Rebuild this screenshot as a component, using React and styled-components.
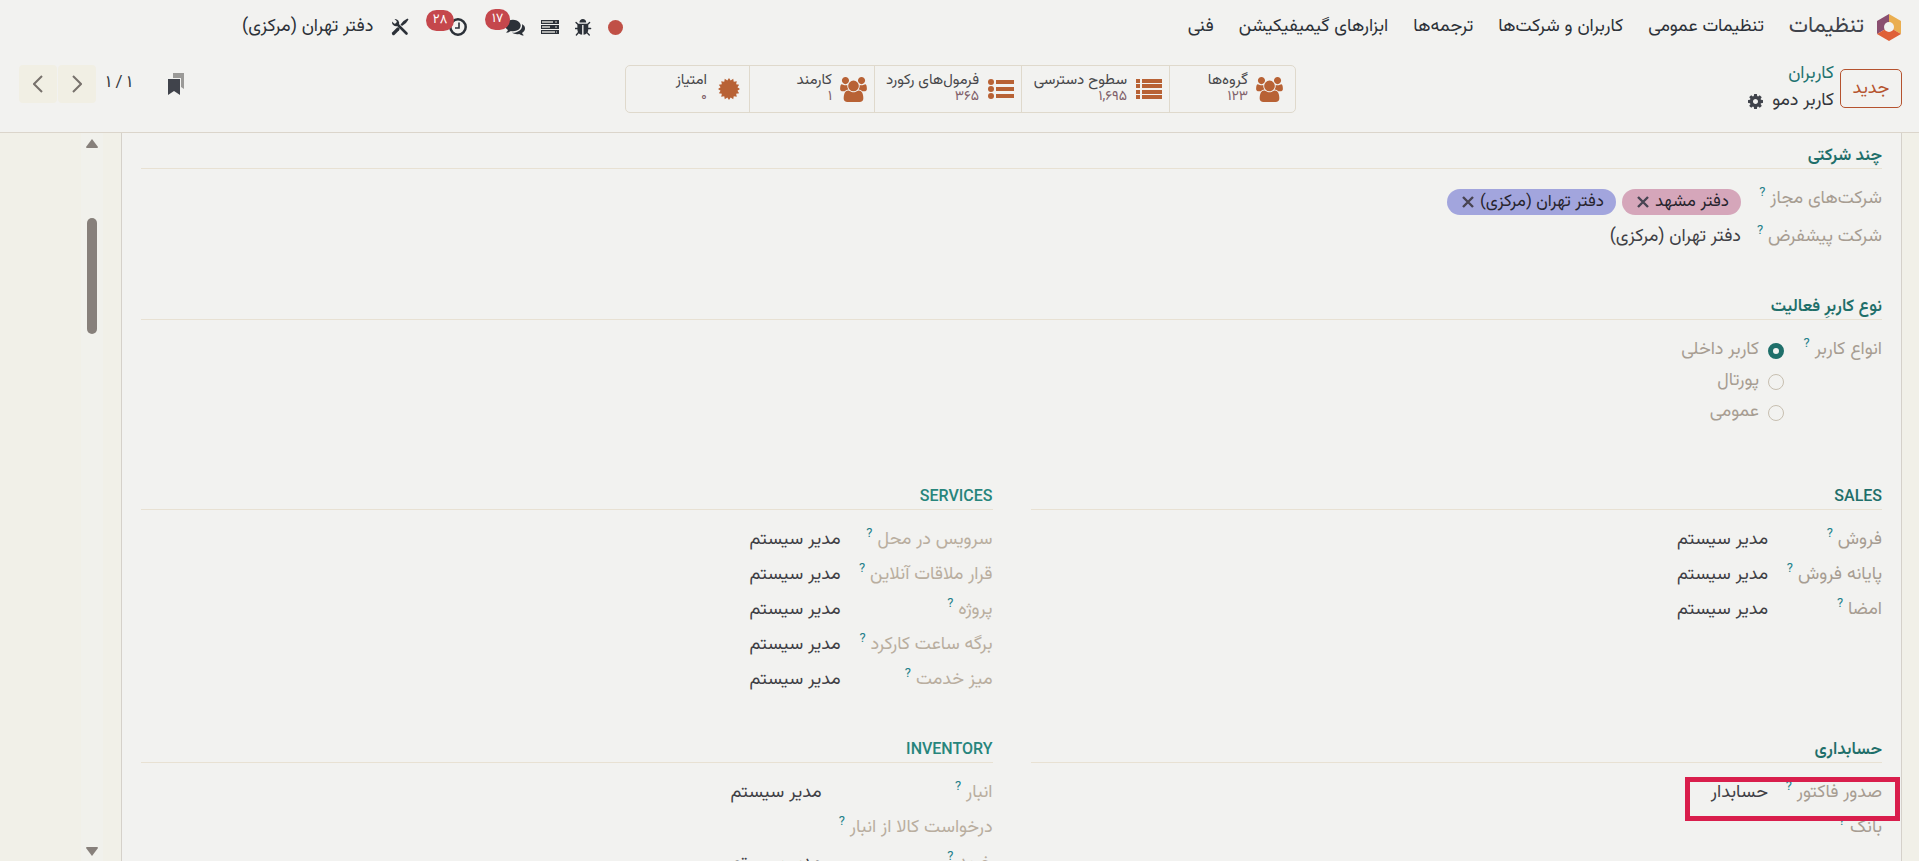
import React, { useState } from "react"
import styled, { createGlobalStyle } from "styled-components"

const GlobalStyle = createGlobalStyle`
  * {
    box-sizing: border-box;
  }
  body {
    margin: 0;
    background: #f2f2f0;
    color: #34373d;
    font-family: "Vazirmatn", "Roboto", "DejaVu Sans", sans-serif;
    font-size: 18px;
  }
  button {
    font: inherit;
    padding: 0;
    cursor: pointer;
  }
  a {
    color: inherit;
    text-decoration: none;
  }
`

const Page = styled.div`
  display: flex;
  flex-direction: column;
  height: 100vh;
  overflow: hidden;
`

/* top bar */

const Navbar = styled.header`
  display: flex;
  justify-content: space-between;
  align-items: center;
  height: 54px;
  padding: 0 18px 0 242px;
  flex-shrink: 0;
`

const NavMenu = styled.nav`
  display: flex;
  align-items: center;
  gap: 25px;
  color: #2c3138;
  line-height: 26px;
  white-space: nowrap;
`

const Brand = styled.a`
  display: flex;
  align-items: center;
  gap: 13px;
  font-size: 22px;
  color: #40434b;
`

const Tray = styled.div`
  display: flex;
  align-items: center;
  color: #2c3138;
`

const TrayButton = styled.button`
  position: relative;
  display: flex;
  border: 0;
  background: none;
  color: inherit;
  margin-left: ${(props) => props.$space || "16px"};
`

const Badge = styled.span`
  position: absolute;
  top: -8px;
  right: calc(100% - 5px);
  min-width: 25px;
  height: 21px;
  padding: 0 7px;
  border-radius: 11px;
  background: #c5474c;
  color: #fff;
  font-size: 13px;
  line-height: 21px;
`

const StatusDot = styled.span`
  width: 15px;
  height: 15px;
  border-radius: 50%;
  background: #c05046;
`

const CompanyButton = styled.button`
  border: 0;
  background: none;
  color: inherit;
  line-height: 26px;
`

/* control panel */

const ControlPanel = styled.div`
  display: grid;
  grid-template-columns: 1fr auto 1fr;
  align-items: start;
  height: 79px;
  padding: 6px 17px 0 19px;
  border-bottom: 1px solid #dbd5cb;
  flex-shrink: 0;
`

const PanelStart = styled.div`
  display: flex;
  gap: 6px;
`

const NewButton = styled.button`
  width: 62px;
  height: 39px;
  margin-top: 9px;
  border: 1px solid #b5532f;
  border-radius: 5px;
  background: none;
  color: #b5532f;
`

const Breadcrumbs = styled.div`
  display: flex;
  flex-direction: column;
  padding-top: 1px;
  line-height: 27px;
`

const CrumbLink = styled.a`
  color: #1f7470;
`

const CurrentCrumb = styled.div`
  display: flex;
  align-items: center;
  gap: 9px;
`

const IconButton = styled.button`
  display: flex;
  border: 0;
  background: none;
  color: #40434b;
`

const StatButtons = styled.div`
  display: flex;
  margin-top: 5px;
  border: 1px solid #dfd9cc;
  border-radius: 5px;
`

const StatButton = styled.button`
  display: flex;
  align-items: center;
  gap: 8px;
  width: ${(props) => props.$width};
  height: 46px;
  padding: 0 ${(props) => props.$inset || "7px"} 0 0;
  border: 0;
  background: none;
  color: #47474a;
  & + & {
    border-right: 1px solid #dfd9cc;
  }
`

const StatIcon = styled.span`
  display: flex;
  justify-content: center;
  width: 27px;
  color: #b86235;
`

const StatText = styled.span`
  display: flex;
  flex-direction: column;
  align-items: flex-start;
  font-size: 15px;
  line-height: 16px;
  white-space: nowrap;
`

const StatCount = styled.span`
  color: #80606a;
  font-size: 14px;
`

const PanelEnd = styled.div`
  display: flex;
  justify-content: flex-end;
  align-items: center;
  height: 38px;
  margin-top: 5px;
`

const PagerCount = styled.span`
  margin: 0 36px 2px 9px;
  font-size: 17px;
  white-space: nowrap;
`

const PagerButton = styled.button`
  display: flex;
  align-items: center;
  justify-content: center;
  width: 38px;
  height: 38px;
  margin-right: 1px;
  border: 0;
  border-radius: 4px;
  background: #f1efe4;
  color: #77716c;
`

/* form */

const Content = styled.main`
  display: flex;
  flex: 1;
  min-height: 0;
  padding-right: 17px;
  background: #f1f0e8;
`

const Sheet = styled.div`
  flex: 1;
  overflow: hidden;
  padding: 9px 19px 0;
  border: solid #d5d1ca;
  border-width: 0 1px;
  background: #f2f2f0;
`

const Columns = styled.div`
  display: grid;
  grid-template-columns: 1fr 1fr;
  column-gap: 38px;
`

const Group = styled.section`
  margin-bottom: 38px;
`

const GroupTitle = styled.h2`
  margin: 0 0 13px;
  padding-top: 2px;
  border-bottom: 1px solid #e8e1d3;
  color: ${(props) => (props.$soft ? "#27857c" : "#1f6f6a")};
  font-size: 17px;
  font-weight: 600;
  line-height: 24px;
  &:lang(en) {
    padding-top: 0;
    font-family: "Roboto", sans-serif;
    font-size: 16px;
    font-weight: 500;
    line-height: 26px;
  }
`

const Fields = styled.dl`
  margin: 0;
`

const Field = styled.div`
  position: relative;
  display: grid;
  grid-template-columns: ${(props) => props.$labelWidth} 1fr;
  min-height: 35px;
  line-height: 35px;
`

const Label = styled.dt`
  color: ${(props) => (props.$soft ? "#b9ae9f" : "#a79d92")};
  white-space: nowrap;
`

const Help = styled.sup`
  margin-right: 5px;
  color: #23808a;
  font-family: "Roboto", sans-serif;
  font-size: 13px;
  line-height: 0;
`

const Value = styled.dd`
  margin: 0;
  color: #3f4045;
`

const Highlight = styled.div`
  position: absolute;
  z-index: 1;
  top: 1px;
  right: -18px;
  width: 215px;
  height: 44px;
  border: 5px solid #d91e4c;
`

const Tags = styled.dd`
  display: flex;
  gap: 6px;
  margin: 0;
  padding: 7px 0 5px;
`

const Tag = styled.span`
  display: flex;
  align-items: center;
  gap: 6px;
  height: 26px;
  padding: 0 12px 0 15px;
  border-radius: 13px;
  background: ${(props) => props.$color};
  color: #27242e;
  font-size: 17px;
  line-height: 26px;
`

const TagRemove = styled.button`
  display: flex;
  border: 0;
  background: none;
  color: #484452;
`

const RadioList = styled.dd`
  margin: 0;
  padding: 2px 0 17px;
`

const RadioItem = styled.label`
  display: flex;
  align-items: center;
  gap: 9px;
  height: 31px;
  color: #a79d92;
`

const Radio = styled.input`
  appearance: none;
  width: 16px;
  height: 16px;
  margin: 0;
  border: 1px solid #c7bfb0;
  border-radius: 50%;
  &:checked {
    border: 5px solid #1f6f6a;
  }
`

const ScrollRail = styled.div`
  display: flex;
  flex-direction: column;
  align-items: center;
  width: 22px;
  margin: 0 18px 0 81px;
  padding: 6px 0 5px;
  background: #f1f1ec;
  color: #87807b;
`

const ScrollThumb = styled.div`
  width: 10px;
  height: 116px;
  margin: 70px 0 auto;
  border-radius: 5px;
  background: #87807b;
`

/* icons */

const Glyph = ({ d, width, height, box = "0 0 1792 1792" }) => (
  <svg width={width} height={height} viewBox={box} fill="currentColor" aria-hidden="true">
    <path d={d} />
  </svg>
)

const usersPath =
  "M593 896q-162 5-265 128h-134q-82 0-138-40.500t-56-118.500q0-353 124-353 6 0 43.500 21t97.500 42.500 119 21.500q67 0 133-23-5 37-5 66 0 139 81 256zm1071 637q0 120-73 189.500t-194 69.500h-874q-121 0-194-69.500t-73-189.500q0-53 3.500-103.500t14-109 26.500-108.500 43-97.500 62-81 85.500-53.500 111.500-20q10 0 43 21.500t73 48 107 48 135 21.500 135-21.500 107-48 73-48 43-21.500q61 0 111.500 20t85.500 53.500 62 81 43 97.500 26.500 108.500 14 109 3.500 103.500zm-1024-1277q0 106-75 181t-181 75-181-75-75-181 75-181 181-75 181 75 75 181zm704 384q0 159-112.500 271.500t-271.500 112.500-271.500-112.500-112.500-271.500 112.500-271.500 271.500-112.500 271.500 112.500 112.500 271.500zm576 225q0 78-56 118.500t-138 40.500h-134q-103-123-265-128 81-117 81-256 0-29-5-66 66 23 133 23 59 0 119-21.500t97.500-42.500 43.500-21q124 0 124 353zm-128-609q0 106-75 181t-181 75-181-75-75-181 75-181 181-75 181 75 75 181z"

const bugPath =
  "M1632 960q0 26-19 45t-45 19h-224q0 171-67 290l208 209q19 19 19 45t-19 45q-18 19-45 19t-45-19l-198-197q-5 5-15 13t-42 28.500-65 36.500-82 29-97 13v-896h-128v896q-51 0-101.500-13.500t-87-33-66-39-43.500-32.500l-15-14-183 207q-20 21-48 21-24 0-43-16-19-18-20.500-44.500t15.500-46.500l202-227q-58-114-58-274h-224q-26 0-45-19t-19-45 19-45 45-19h224v-294l-173-173q-19-19-19-45t19-45 45-19 45 19l173 173h844l173-173q19-19 45-19t45 19 19 45-19 45l-173 173v294h224q26 0 45 19t19 45zm-480-576h-640q0-133 93.500-226.500t226.500-93.500 226.500 93.500 93.500 226.500z"

const commentsPath =
  "M1408 768q0 139-94 257t-256.500 186.500-353.500 68.500q-86 0-176-16-124 88-278 128-36 9-86 16h-3q-11 0-20.500-8t-11.500-21q-1-3-1-6.500t.5-6.500 2-6l2.500-5 3.500-5.500 4-5 4.500-5 4-4.500q5-6 23-25t26-29.500 22.500-29 25-38.500 20.500-44q-124-72-195-177t-71-224q0-139 94-257t256.500-186.500 353.500-68.500 353.500 68.500 256.500 186.500 94 257zm384 256q0 120-71 224.500t-195 176.500q10 24 20.500 44t25 38.500 22.500 29 26 29.500 23 25q1 1 4 4.500t4.500 5 4 5 3.500 5.500l2.500 5 2 6 .5 6.500-1 6.500q-3 14-13 22t-22 7q-50-7-86-16-154-40-278-128-90 16-176 16-271 0-472-132 58 4 88 4 161 0 309-45t264-129q125-92 192-212t67-254q0-77-23-152 129 71 204 178t75 230z"

const cogPath =
  "M1152 896q0-106-75-181t-181-75-181 75-75 181 75 181 181 75 181-75 75-181zm512-109v222q0 12-8 23t-20 13l-185 28q-19 54-39 91 35 50 107 138 10 12 10 25t-9 23q-27 37-99 108t-94 71q-12 0-26-9l-138-108q-44 23-91 38-16 136-29 186-7 28-36 28h-222q-14 0-24.500-8.500t-11.500-21.500l-28-184q-49-16-90-37l-141 107q-10 9-25 9-14 0-25-11-126-114-165-168-7-10-7-23 0-12 8-23 15-21 51-66.500t54-70.500q-27-50-41-99l-183-27q-13-2-21-12.500t-8-23.500v-222q0-12 8-23t19-13l186-28q14-46 39-92-40-57-107-138-10-12-10-24 0-10 9-23 26-36 98.500-107.500t94.500-71.500q13 0 26 10l138 107q44-23 91-38 16-136 29-186 7-28 36-28h222q14 0 24.500 8.500t11.500 21.500l28 184q49 16 90 37l142-107q9-9 24-9 13 0 25 10 129 119 165 170 7 8 7 22 0 12-8 23-15 21-51 66.500t-54 70.500q26 50 41 98l183 28q13 2 21 12.500t8 23.500z"

const UsersIcon = () => <Glyph d={usersPath} width={27} height={25} box="0 0 1920 1792" />

const ListIcon = () => (
  <Glyph
    d="M0 0h4v4H0zM6 0h20v4H6zM0 5h4v4H0zM6 5h20v4H6zM0 11h4v4H0zM6 11h20v4H6zM0 16h4v4H0zM6 16h20v4H6z"
    width={26}
    height={20}
    box="0 0 26 20"
  />
)

const BulletsIcon = () => (
  <svg width="26" height="21" viewBox="0 0 26 21" fill="currentColor" aria-hidden="true">
    <circle cx="3" cy="3" r="3" />
    <circle cx="3" cy="10" r="3" />
    <circle cx="3" cy="17" r="3" />
    <path d="M8 1h18v4H8zM8 8h18v4H8zM8 15h18v4H8z" />
  </svg>
)

const burst = Array.from({ length: 32 }, (_, i) => {
  const r = i % 2 ? 8.6 : 11
  const a = (i * Math.PI) / 16
  return `${11 + r * Math.sin(a)},${11 - r * Math.cos(a)}`
}).join(" ")

const BurstIcon = () => (
  <svg width="22" height="22" viewBox="0 0 22 22" fill="currentColor" aria-hidden="true">
    <polygon points={burst} />
  </svg>
)

const Logo = () => (
  <svg width="24" height="27" viewBox="0 0 24 27" aria-hidden="true">
    <path d="M12 0L0 7v13l12-7z" fill="#8a4f70" />
    <path d="M12 0l12 7v13l-12-7z" fill="#eaae50" />
    <path d="M12 13L0 20l12 7 12-7z" fill="#df6038" />
    <circle cx="12" cy="13" r="5" fill="#f2f2f0" />
  </svg>
)

const ServersIcon = () => (
  <svg width="18" height="14" viewBox="0 0 18 14" aria-hidden="true">
    <path d="M0 0h18v4H0zM0 5h18v4H0zM0 10h18v4H0z" fill="#2c3138" />
    <path d="M1 2h11M1 7h8M1 12h13" stroke="#d9d9d4" strokeWidth="1.500" />
    <path d="M14 2h2M14 7h2M15 12h1" stroke="#d9d9d4" strokeWidth="1" />
  </svg>
)

const ClockIcon = () => (
  <svg width="18" height="18" viewBox="0 0 18 18" fill="none" stroke="currentColor" aria-hidden="true">
    <circle cx="9" cy="9" r="7.700" strokeWidth="2.500" />
    <path d="M10 4.500V10H6" strokeWidth="1.600" />
  </svg>
)

const ToolsIcon = () => (
  <svg width="18" height="18" viewBox="0 0 18 18" aria-hidden="true">
    <path d="M6 6l9.500 9.500" stroke="currentColor" strokeWidth="2.600" strokeLinecap="round" />
    <path
      d="M3.500 1A4.200 4.200 0 0 1 8 6.500L6.500 8A4.200 4.200 0 0 1 1 3.500l2.400 2.200 2-.400.400-2z"
      fill="currentColor"
    />
    <path d="M17.500 1.500l-1-1-4 2.500-3 3.500 1.500 1.500 4-3z" fill="currentColor" />
    <path d="M7 11l-4.500 4.500" stroke="currentColor" strokeWidth="3.200" strokeLinecap="round" />
  </svg>
)

const BookmarksIcon = () => (
  <svg width="16" height="22" viewBox="0 0 16 22" aria-hidden="true">
    <path d="M5 0h11v16l-3-2V5H5z" fill="#9b9a98" />
    <path d="M0 6h12v16l-6-4-6 4z" fill="#40434b" />
  </svg>
)

const Chevron = ({ d }) => (
  <svg width="10" height="18" viewBox="0 0 10 18" fill="none" stroke="currentColor" strokeWidth="2" aria-hidden="true">
    <path d={d} />
  </svg>
)

const CloseIcon = () => (
  <svg width="12" height="12" viewBox="0 0 12 12" stroke="currentColor" strokeWidth="2.400" aria-hidden="true">
    <path d="M1 1l10 10M11 1L1 11" />
  </svg>
)

/* data */

const menu = ["تنظیمات عمومی", "کاربران و شرکت‌ها", "ترجمه‌ها", "ابزارهای گیمیفیکیشن", "فنی"]

const stats = [
  { label: "گروه‌ها", count: "۱۲۳", width: "125px", inset: "12px", Icon: UsersIcon },
  { label: "سطوح دسترسی", count: "۱,۶۹۵", width: "148px", Icon: ListIcon },
  { label: "فرمول‌های رکورد", count: "۳۶۵", width: "147px", Icon: BulletsIcon },
  { label: "کارمند", count: "۱", width: "125px", Icon: UsersIcon },
  { label: "امتیاز", count: "۰", width: "124px", Icon: BurstIcon },
]

const userTypes = ["کاربر داخلی", "پورتال", "عمومی"]

const admin = "مدیر سیستم"

const appGroups = [
  {
    title: "SALES",
    lang: "en",
    labelWidth: "114px",
    fields: [["فروش", admin], ["پایانه فروش", admin], ["امضا", admin]],
  },
  {
    title: "SERVICES",
    lang: "en",
    soft: true,
    labelWidth: "152px",
    fields: [
      ["سرویس در محل", admin],
      ["قرار ملاقات آنلاین", admin],
      ["پروژه", admin],
      ["برگه ساعت کارکرد", admin],
      ["میز خدمت", admin],
    ],
  },
  {
    title: "حسابداری",
    labelWidth: "114px",
    highlighted: "صدور فاکتور",
    fields: [["صدور فاکتور", "حسابدار"], ["بانک", ""]],
  },
  {
    title: "INVENTORY",
    lang: "en",
    soft: true,
    labelWidth: "171px",
    fields: [["انبار", admin], ["درخواست کالا از انبار", ""], ["خرید", admin]],
  },
]

const AppGroup = ({ title, lang, soft, labelWidth, highlighted, fields }) => (
  <Group>
    <GroupTitle lang={lang} $soft={soft}>
      {title}
    </GroupTitle>
    <Fields>
      {fields.map(([label, value]) => (
        <Field key={label} $labelWidth={labelWidth}>
          <Label $soft={soft}>
            {label}
            <Help>?</Help>
          </Label>
          <Value>{value}</Value>
          {highlighted === label && <Highlight />}
        </Field>
      ))}
    </Fields>
  </Group>
)

export default function App() {
  const [userType, setUserType] = useState(userTypes[0])

  return (
    <Page dir="rtl" lang="fa">
      <GlobalStyle />
      <Navbar>
        <NavMenu>
          <Brand href="#">
            <Logo />
            تنظیمات
          </Brand>
          {menu.map((item) => (
            <a href="#" key={item}>
              {item}
            </a>
          ))}
        </NavMenu>
        <Tray>
          <TrayButton aria-label="وضعیت">
            <StatusDot />
          </TrayButton>
          <TrayButton aria-label="اشکال‌زدایی">
            <Glyph d={bugPath} width={17} height={17} box="128 64 1536 1600" />
          </TrayButton>
          <TrayButton aria-label="سرورها">
            <ServersIcon />
          </TrayButton>
          <TrayButton aria-label="گفتگوها" $space="38px">
            <Glyph d={commentsPath} width={20} height={20} />
            <Badge>۱۷</Badge>
          </TrayButton>
          <TrayButton aria-label="فعالیت‌ها" $space="40px">
            <ClockIcon />
            <Badge>۲۸</Badge>
          </TrayButton>
          <TrayButton aria-label="ابزارها" $space="18px">
            <ToolsIcon />
          </TrayButton>
          <CompanyButton>دفتر تهران (مرکزی)</CompanyButton>
        </Tray>
      </Navbar>

      <ControlPanel>
        <PanelStart>
          <NewButton>جدید</NewButton>
          <Breadcrumbs>
            <CrumbLink href="#">کاربران</CrumbLink>
            <CurrentCrumb>
              کاربر دمو
              <IconButton aria-label="اقدامات">
                <Glyph d={cogPath} width={15} height={15} box="128 128 1536 1536" />
              </IconButton>
            </CurrentCrumb>
          </Breadcrumbs>
        </PanelStart>
        <StatButtons>
          {stats.map(({ label, count, width, inset, Icon }) => (
            <StatButton key={label} $width={width} $inset={inset}>
              <StatIcon>
                <Icon />
              </StatIcon>
              <StatText>
                {label}
                <StatCount>{count}</StatCount>
              </StatText>
            </StatButton>
          ))}
        </StatButtons>
        <PanelEnd>
          <IconButton aria-label="نشان‌ها">
            <BookmarksIcon />
          </IconButton>
          <PagerCount>۱ / ۱</PagerCount>
          <PagerButton aria-label="قبلی">
            <Chevron d="M1 1l8 8-8 8" />
          </PagerButton>
          <PagerButton aria-label="بعدی">
            <Chevron d="M9 1L1 9l8 8" />
          </PagerButton>
        </PanelEnd>
      </ControlPanel>

      <Content>
        <Sheet>
          <Group>
            <GroupTitle>چند شرکتی</GroupTitle>
            <Fields>
              <Field $labelWidth="141px">
                <Label>
                  شرکت‌های مجاز
                  <Help>?</Help>
                </Label>
                <Tags>
                  <Tag $color="#d5a6ba">
                    دفتر مشهد
                    <TagRemove aria-label="حذف دفتر مشهد">
                      <CloseIcon />
                    </TagRemove>
                  </Tag>
                  <Tag $color="#a2a5dd">
                    دفتر تهران (مرکزی)
                    <TagRemove aria-label="حذف دفتر تهران">
                      <CloseIcon />
                    </TagRemove>
                  </Tag>
                </Tags>
              </Field>
              <Field $labelWidth="141px">
                <Label>
                  شرکت پیشفرض
                  <Help>?</Help>
                </Label>
                <Value>دفتر تهران (مرکزی)</Value>
              </Field>
            </Fields>
          </Group>

          <Group>
            <GroupTitle>نوع کاربرِ فعالیت</GroupTitle>
            <Fields>
              <Field $labelWidth="98px">
                <Label>
                  انواع کاربر
                  <Help>?</Help>
                </Label>
                <RadioList>
                  {userTypes.map((type) => (
                    <RadioItem key={type}>
                      <Radio
                        type="radio"
                        name="user-type"
                        checked={userType === type}
                        onChange={() => setUserType(type)}
                      />
                      {type}
                    </RadioItem>
                  ))}
                </RadioList>
              </Field>
            </Fields>
          </Group>

          <Columns>
            {appGroups.map((group) => (
              <AppGroup key={group.title} {...group} />
            ))}
          </Columns>
        </Sheet>
        <ScrollRail>
          <Glyph d="M6 0l6 8q0 1-1 1H1q-1 0-1-1z" width={12} height={9} box="0 0 12 9" />
          <ScrollThumb />
          <Glyph d="M6 9L0 1q0-1 1-1h10q1 0 1 1z" width={12} height={9} box="0 0 12 9" />
        </ScrollRail>
      </Content>
    </Page>
  )
}
